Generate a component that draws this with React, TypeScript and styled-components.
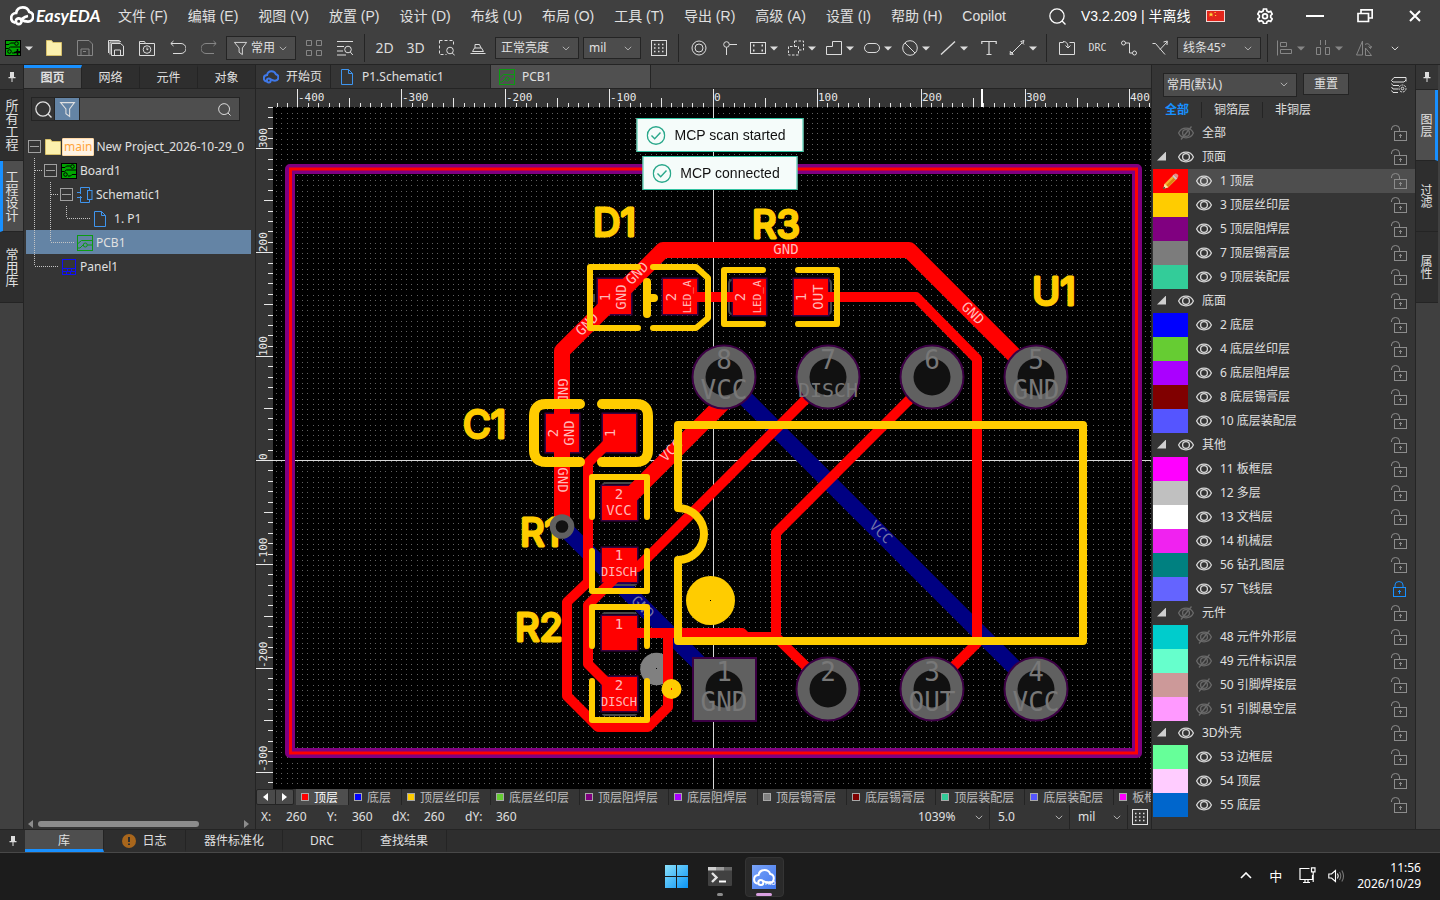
import React from 'react';
import styled, { createGlobalStyle, css } from 'styled-components';

const c = {
  bar: '#404040',
  panel: '#353535',
  tab: '#2e2e2e',
  active: '#4e4e4e',
  line: '#242424',
  text: '#e0e0e0',
  dim: '#868686',
  blue: '#1890ff',
  select: '#6484a5',
};

const GlobalStyle = createGlobalStyle`
  * { box-sizing: border-box; }
  body {
    margin: 0;
    background: ${c.bar};
    color: ${c.text};
    font: 12px/16px "Noto Sans", "Noto Sans CJK SC", sans-serif;
    overflow: hidden;
  }
  button, input, select { font: inherit; color: inherit; border: 0; margin: 0; padding: 0; background: none; border-radius: 0; }
  svg { display: block; flex: none; }
`;

/* ---------- icons ---------- */

const Glyph = ({ size = 16, children, w = 1 }: { size?: number; children: React.ReactNode; w?: number }) => (
  <svg width={size} height={size} viewBox="0 0 16 16" fill="none" stroke="currentColor" strokeWidth={w} aria-hidden="true">
    {children}
  </svg>
);

const Chevron = () => (
  <svg width="8" height="5" viewBox="0 0 8 5" fill="none" stroke="currentColor" aria-hidden="true">
    <path d="M.8.8 4 3.9 7.2.8" />
  </svg>
);

const Caret = () => (
  <svg width="8" height="5" viewBox="0 0 8 5" fill="currentColor" aria-hidden="true">
    <path d="M0 .5h8L4 4.5z" />
  </svg>
);

const BoardIcon = ({ plus }: { plus?: boolean }) => (
  <Glyph size={16}>
    <rect x=".5" y=".5" width="15" height="15" fill="#00a600" stroke="#000" />
    <g stroke="#000">
      <path d="M1 4.500h3l1.500-1.500h4M15 11.500h-4l-1.500 1.500H7" />
      <circle cx="11.500" cy="3.500" r="1.800" />
      <circle cx="4.500" cy="11.500" r="1.800" />
      <path d="M1 8.500h2.500l2-1.500H15" />
    </g>
    {plus && <path d="M12.500 9v7M9 12.500h7" stroke="#000" strokeWidth="1.500" />}
  </Glyph>
);
const FolderIcon = () => (
  <Glyph>
    <path d="M.5 15.500V.500h5l1.500 2h8.500v13z" fill="#fbf0ae" stroke="#d6bf6a" />
  </Glyph>
);
const PcbIcon = () => (
  <Glyph>
    <g stroke="#0c9a12">
      <rect x=".5" y=".5" width="15" height="15" />
      <path d="M1 8.500 4.500 5.500H15M10.500 10H15M1 13h2l3-3" />
      <circle cx="8.300" cy="10" r="2" />
    </g>
  </Glyph>
);
const FileIcon = () => (
  <Glyph>
    <path d="M2.500.5h7l4 4v11h-11zM9.500.5v4h4" stroke="#3f95ee" />
  </Glyph>
);
const SchematicIcon = () => (
  <Glyph>
    <g stroke="#3f95ee">
      <path d="M0 5.500h3M0 10.500h5M3.500 4v3M3.500 5V.500h9V3M3.500 9v6.500h9V13" />
      <rect x="10.500" y="3.500" width="4.500" height="9" />
    </g>
  </Glyph>
);
const PanelIcon = () => (
  <Glyph>
    <g stroke="#1010f5">
      <rect x="1.500" y=".5" width="13" height="15" />
      <path d="M2 9.500h12M2 12.500h12M6.500 9.500v3M10.500 9.500v3M5.500 12.500v3M9.500 12.500v3" />
    </g>
  </Glyph>
);
const CLOUD = 'M3.500 12.500C1.500 12 .8 10.800.8 9.300c0-2 1.500-3.200 3.300-3.300C4.500 3.800 6.300 2.300 8.500 2.300c2 0 3.600 1.100 4.300 2.900 1.700.3 2.600 1.600 2.600 3.100 0 2.200-1.500 3.400-3.400 3.400-1.800 0-2.800-.2-4.300-1.300';
const CloudIcon = ({ size = 16, w = 2 }: { size?: number; w?: number }) => (
  <Glyph size={size} w={w}>
    <path d={CLOUD} />
    <path d="M12 8c-1.500.2-2.500.8-4.500 2.300" />
    <circle cx="5.800" cy="11.500" r="1.900" />
  </Glyph>
);
const Magnifier = ({ size = 16 }: { size?: number }) => (
  <Glyph size={size} w={1.2}>
    <circle cx="7.500" cy="7.500" r="6.700" />
    <path d="m12.300 12.300 3.200 3.200" />
  </Glyph>
);
const Funnel = ({ size = 16 }: { size?: number }) => (
  <Glyph size={size}>
    <path d="M1.500 1.500h13L10 7.500v7l-3.500-2.500V7.500z" />
  </Glyph>
);
const PinIcon = () => (
  <svg width="8" height="10" viewBox="0 0 8 10" fill="#ddd" aria-hidden="true">
    <path d="M2 0h4v5h1.500v1.200h-3V10h-1V6.200h-3V5H2z" />
  </svg>
);
const Eye = ({ off }: { off?: boolean }) => (
  <Glyph w={1.3}>
    <g stroke={off ? '#6a6a6a' : '#d8d8d8'}>
      <path d="M.6 8C2 5 4.600 3.200 8 3.200S14 5 15.400 8C14 11 11.400 12.800 8 12.800S2 11 .6 8z" />
      <circle cx="8" cy="8" r="3.400" />
      {off && <path d="M13.500 1.500 3 14.500" />}
    </g>
  </Glyph>
);
const Lock = ({ closed }: { closed?: boolean }) => (
  <Glyph>
    <g stroke={closed ? c.blue : '#8c8c8c'}>
      <path d={closed ? 'M4 6.500V4a4 3.500 0 0 1 8 0v2.500' : 'M.5 5V4a4 3.500 0 0 1 8 0v2.500'} />
      <rect x={closed ? 2.5 : 3.5} y="6.500" width={closed ? 12 : 12} height="9" />
      <path d={closed ? 'M8.500 9v4M7 10.500h3' : 'M9.500 9v4M8 10.500h3'} />
    </g>
  </Glyph>
);
const DotGrid = () => (
  <Glyph>
    <rect x=".5" y=".5" width="15" height="15" />
    <path d="M3 4.500h11M3 8h11M3 11.500h11" strokeDasharray="1.500 2.500" strokeWidth="1.500" />
  </Glyph>
);

const icons: Record<string, React.ReactNode> = {
  save: <path d="M.5.500V15.500h15V4L12 .500H.500zM4 15.500V9h8v6.500M6 11.500h3" />,
  saveAll: <path d="M3.500 3.500v12h12V6l-3-2.500zM6.500 15.500V10h6v5.500M.5 13V.500H11l2 1.500M2 14.500V2h10" />,
  recent: <><path d="M.5 15.500V1.500h5l1 2h9v12zM.5 3.500h6" /><circle cx="8" cy="9.500" r="3.800" /><path d="M8 7.500v2.500l1.500-1" /></>,
  undo: <path d="M3.500 1 .8 3.500 3.500 6M1 3.500h10a4.500 4.500 0 0 1 0 10H3" />,
  redo: <path d="m12.500 1 2.700 2.500L12.500 6M15 3.500H5a4.500 4.500 0 0 0 0 10h8" />,
  four: <path d="M.500.500h5v5h-5zM10.500.500h5v5h-5zM.500 10.500h5v5h-5zM10.500 10.500h5v5h-5z" />,
  find: <><path d="M0 1.500h16M0 6.500h7M0 11h6M0 15h9" /><circle cx="11" cy="9.500" r="3.300" /><path d="m13.300 12 2.500 3" /></>,
  area: <><path d="M.5.500h14v6M.5.500v14h7" strokeDasharray="3 2" /><circle cx="11" cy="10.500" r="3.300" /><path d="m13.300 13 2.500 2.500" /></>,
  stamp: <path d="M.5 13.500h15M2.500 11.500 4.500 8h7l2 3.500zM5 8V4.500h4.500L11 8" />,
  target: <><circle cx="8" cy="8" r="7" /><circle cx="8" cy="8" r="4" /></>,
  node: <><circle cx="4.500" cy="4.500" r="2.800" /><path d="M7.300 4.500H15M4.500 7.300V15" /></>,
  rect: <><rect x=".5" y="2.500" width="15" height="11" /><path d="M3 5.500h1.500M3 10.500h1.500M11.500 5.500H13M11.500 10.500H13" strokeWidth="2" /></>,
  region: <path d="M6.500 1h9v9h-5v5H.500V6.500h6zM6.500 6.500h4v4" strokeDasharray="2.500 1.500" />,
  poly: <path d="M.5 14.500v-8h6v-5h9v13z" />,
  slot: <rect x=".5" y="3.500" width="15" height="9" rx="4.500" />,
  forbid: <><circle cx="8" cy="8" r="7.300" /><path d="m3 3 10 10" /></>,
  line: <path d="M1 14.500 15 1.500" strokeWidth="1.400" />,
  text: <path d="M.8 4V1.500h14.400V4M8 1.500v13M5.500 14.500h5" strokeWidth="1.200" />,
  measure: <path d="m3 13 10-10M1 11.500l3.500 3.500M11.500 1 15 4.500M12 1.500l3-1-1 3M1 14.500l.5-3 2.500 2.500z" />,
  import: <path d="M4.500 2.500h-4v12h15v-12h-5M4 1.500c3.500 0 5 2 5 6M6.500 5.500 9 8l2.500-2.500" />,
  route: <><circle cx="2.500" cy="3" r="2" /><circle cx="13.500" cy="13" r="2" /><path d="M4.500 3h4v10h3" /></>,
  branch: <path d="M.5 3.500h3L13 14.500M8 9.500l7-7.500M11.500 2 15.300 1 15 5" />,
  align: <path d="M.5.500v15M3.500 2.500h6v4h-6zM3.500 9.500h11v4h-11z" />,
  spread: <path d="M5.500 0v5M10.500 0v5M1.500 7.500h4v7h-4zM10.500 7.500h4v7h-4z" />,
  flip: <path d="M6.500 1v14h-6zM9.500 8l6 7.500h-6zM9 4.500c3-2 5.500 0 5.500 4M12.500 6.500l2 2 1.500-2.500" />,
};

/* ---------- menu bar ---------- */

const Page = styled.div`
  display: flex;
  flex-direction: column;
  min-height: 100vh;
`;
const MenuBar = styled.header`
  display: flex;
  align-items: center;
  height: 32px;
  padding: 0 19px 0 10px;
  font: 14px/32px "Liberation Sans", "Noto Sans CJK SC", sans-serif;
`;
const Logo = styled.div`
  display: flex;
  align-items: center;
  gap: 2px;
  width: 98px;
  color: #fff;
  font: italic 700 17px/32px Lato, sans-serif;
`;
const Menus = styled.nav`
  display: flex;
  flex: 1;
  gap: 20px;
  padding-left: 10px;
  white-space: nowrap;
`;
const MenuButton = styled.button`
  cursor: pointer;
`;
const WindowTools = styled.div`
  display: flex;
  align-items: center;
  color: #fff;
  white-space: nowrap;
`;
const WindowButton = styled.button<{ $gap: number }>`
  margin-left: ${(p) => p.$gap}px;
`;
const Version = styled.span`
  width: 112px;
  margin-left: 15px;
`;

const menus = ['文件 (F)', '编辑 (E)', '视图 (V)', '放置 (P)', '设计 (D)', '布线 (U)', '布局 (O)', '工具 (T)', '导出 (R)', '高级 (A)', '设置 (I)', '帮助 (H)', 'Copilot'];

const TopMenu = () => (
  <MenuBar>
    <Logo><CloudIcon size={24} w={1.8} />EasyEDA</Logo>
    <Menus>{menus.map((m) => <MenuButton key={m}>{m}</MenuButton>)}</Menus>
    <WindowTools>
      <WindowButton $gap={0} aria-label="搜索"><Magnifier size={17} /></WindowButton>
      <Version>V3.2.209 | 半离线</Version>
      <WindowButton $gap={13} aria-label="语言">
        <svg width="19" height="12" viewBox="0 0 19 12"><rect x=".5" y=".5" width="18" height="11" fill="#e3251b" stroke="#f3d6d4" /><path d="m5 2 .7 1.700h1.800L6.100 4.800l.6 1.800L5 5.500 3.300 6.600l.6-1.800-1.400-1.100h1.800zM8.500 2h1.200v1H8.500zM9 5h1.200v1H9z" fill="#ffd83a" /></svg>
      </WindowButton>
      <WindowButton $gap={32} aria-label="设置">
        <Glyph w={1.7}><path d="M6.500 1h3l.5 2.100 1.700 1 2-.7 1.500 2.600-1.500 1.500v1.900l1.500 1.500-1.500 2.600-2-.7-1.700 1-.5 1.700h-3L6 13.800l-1.700-1-2 .7-1.500-2.600 1.500-1.500V7.500L.8 6l1.500-2.600 2 .7L6 3.100z" /><circle cx="8" cy="8.300" r="2.400" /></Glyph>
      </WindowButton>
      <WindowButton $gap={33} aria-label="最小化"><svg width="18" height="2"><rect width="18" height="2" fill="#fff" /></svg></WindowButton>
      <WindowButton $gap={33} aria-label="还原"><Glyph w={1.7}><path d="M1 5.500h10.500v8H1zM4 5V1.800h11.200V10H12" /></Glyph></WindowButton>
      <WindowButton $gap={36} aria-label="关闭"><svg width="12" height="12" stroke="#fff" strokeWidth="2"><path d="m1 1 10 10M11 1 1 11" /></svg></WindowButton>
    </WindowTools>
  </MenuBar>
);

/* ---------- toolbar ---------- */

const ToolbarRow = styled.div`
  display: flex;
  align-items: center;
  height: 33px;
  border-bottom: 1px solid ${c.line};
`;
const ToolButton = styled.button<{ $kind?: 'menu'; $dim?: boolean; $small?: boolean }>`
  display: flex;
  align-items: center;
  justify-content: center;
  gap: 4px;
  flex: none;
  width: ${(p) => (p.$kind ? 38 : 31)}px;
  height: 28px;
  color: ${(p) => (p.$dim ? c.dim : '#dcdcdc')};
  ${(p) => p.$small && css`font: 10px/16px "DejaVu Sans Mono", monospace;`}
  ${(p) => !p.$small && css`font-size: 14px;`}
`;
const Divider = styled.i`
  width: 1px;
  height: 28px;
  margin: 0 4px;
  background: ${c.line};
`;
const SelectBox = styled.label<{ $w: number; $inset?: number; $plain?: boolean; $h?: number }>`
  position: relative;
  display: flex;
  align-items: center;
  flex: none;
  width: ${(p) => p.$w}px;
  height: ${(p) => p.$h ?? 22}px;
  margin: 0 2px;
  background: ${(p) => (p.$plain ? 'none' : '#4c4c4c')};
  border: ${(p) => (p.$plain ? 'none' : `1px solid ${c.line}`)};
  select { width: 100%; height: 100%; padding-left: ${(p) => p.$inset ?? 5}px; appearance: none; outline: 0; }
  svg { position: absolute; pointer-events: none; color: #b0b0b0; }
  svg:last-child { right: 8px; }
  svg:first-child { left: 6px; color: #ddd; }
`;
const Picker = (p: { label: string; value: string; w: number; inset?: number; h?: number; icon?: React.ReactNode; plain?: boolean }) => (
  <SelectBox $w={p.w} $inset={p.inset} $plain={p.plain} $h={p.h}>
    {p.icon}
    <select aria-label={p.label} defaultValue={p.value}><option>{p.value}</option></select>
    <Chevron />
  </SelectBox>
);
const Tool = ({ id, menu, dim }: { id: string; menu?: boolean; dim?: boolean }) => (
  <ToolButton $kind={menu ? 'menu' : undefined} $dim={dim} aria-label={id}>
    <Glyph>{icons[id]}</Glyph>
    {menu && <Caret />}
  </ToolButton>
);

const Toolbar = () => (
  <ToolbarRow>
    <ToolButton $kind="menu" aria-label="新建"><BoardIcon plus /><Caret /></ToolButton>
    <ToolButton aria-label="打开"><FolderIcon /></ToolButton>
    <Tool id="save" dim /><Tool id="saveAll" /><Tool id="recent" /><Tool id="undo" /><Tool id="redo" dim />
    <Picker label="过滤" value="常用" w={70} h={24} inset={24} icon={<Funnel size={15} />} />
    <Tool id="four" dim /><Tool id="find" />
    <Divider />
    <ToolButton>2D</ToolButton><ToolButton>3D</ToolButton><Tool id="area" /><Tool id="stamp" />
    <Picker label="亮度" value="正常亮度" w={84} />
    <Picker label="单位" value="mil" w={58} />
    <ToolButton aria-label="网格"><DotGrid /></ToolButton>
    <Divider />
    <Tool id="target" /><Tool id="node" />
    <Tool id="rect" menu /><Tool id="region" menu /><Tool id="poly" menu /><Tool id="slot" menu /><Tool id="forbid" menu /><Tool id="line" menu />
    <Tool id="text" /><Tool id="measure" menu />
    <Divider />
    <Tool id="import" /><ToolButton $small>DRC</ToolButton><Tool id="route" /><Tool id="branch" />
    <Picker label="布线角度" value="线条45°" w={84} />
    <Divider />
    <Tool id="align" menu dim /><Tool id="spread" menu dim /><Tool id="flip" dim />
    <ToolButton aria-label="更多"><Chevron /></ToolButton>
  </ToolbarRow>
);

/* ---------- side rails ---------- */

const Body = styled.div`
  display: flex;
  flex: 1;
  min-height: 0;
`;
const Rail = styled.div<{ $right?: boolean }>`
  display: flex;
  flex-direction: column;
  flex: none;
  width: ${(p) => (p.$right ? 25 : 24)}px;
  ${(p) => (p.$right ? `padding-right: 2px; border-left: 1px solid ${c.line};` : `border-right: 1px solid ${c.line};`)}
`;
const PinButton = styled.button`
  display: grid;
  place-items: center;
  width: 100%;
  height: 25px;
  background: ${c.panel};
  border-bottom: 1px solid ${c.line};
`;
const RailTab = styled.button<{ $on?: boolean; $right?: boolean }>`
  display: flex;
  align-items: center;
  justify-content: center;
  height: 71px;
  background: ${(p) => (p.$on ? c.active : c.tab)};
  border-bottom: 1px solid ${c.line};
  padding-right: ${(p) => (p.$on && p.$right ? 1 : p.$right ? 4 : p.$on ? 3 : 0)}px;
  ${(p) => p.$on && (p.$right ? `border-right: 3px solid ${c.blue};` : `border-left: 3px solid ${c.blue};`)}
  writing-mode: vertical-rl;
  font-size: ${(p) => (p.$right ? 12 : 13)}px;
`;

/* ---------- project tree ---------- */

const Side = styled.aside`
  display: flex;
  flex-direction: column;
  flex: none;
  width: 232px;
  background: ${c.panel};
  border-right: 1px solid ${c.line};
`;
const TabStrip = styled.div`
  display: flex;
  height: 24px;
  border-bottom: 1px solid ${c.line};
`;
const SideTab = styled.button<{ $on?: boolean }>`
  flex: 1;
  border-right: 1px solid ${c.line};
  border-top: 3px solid ${(p) => (p.$on ? c.blue : 'transparent')};
  background: ${(p) => (p.$on ? c.active : c.tab)};
  font-weight: ${(p) => (p.$on ? 700 : 400)};
  line-height: 18px;
  &:last-child { border-right: 0; }
`;
const SearchBar = styled.div`
  display: flex;
  align-items: stretch;
  height: 24px;
  margin: 8px 15px 13px 7px;
  border: 1px solid ${c.line};
`;
const SearchMode = styled.button<{ $on?: boolean }>`
  display: grid;
  place-items: center;
  flex: none;
  width: ${(p) => (p.$on ? 25 : 23)}px;
  background: ${(p) => (p.$on ? c.select : 'none')};
  border-right: 1px solid ${c.line};
`;
const SearchField = styled.label`
  display: flex;
  align-items: center;
  flex: 1;
  min-width: 0;
  padding-right: 8px;
  background: ${c.active};
  input { flex: 1; width: 100%; min-width: 0; outline: 0; }
`;
const Tree = styled.div`
  position: relative;
  flex: 1;
  margin: 0 4px 0 2px;
`;
const TreeLines = styled.svg`
  position: absolute;
  left: 0;
  top: 0;
  pointer-events: none;
`;
const TreeRow = styled.div<{ $indent: number; $on?: boolean }>`
  display: flex;
  align-items: center;
  gap: 3px;
  height: 24px;
  padding: 1px 0 0 ${(p) => p.$indent}px;
  background: ${(p) => (p.$on ? c.select : 'none')};
  white-space: nowrap;
  overflow: hidden;
`;
const Fold = styled.button`
  flex: none;
  width: 13px;
  height: 13px;
  margin-right: 1px;
  border: 1px solid #a0a0a0;
  background: linear-gradient(#a0a0a0, #a0a0a0) center / 9px 1px no-repeat ${c.panel};
`;
const Tag = styled.span`
  margin: 0 -1px 0 -2px;
  padding: 0 1px;
  height: 18px;
  background: #fff3e4;
  border: 1px solid #ffd9a6;
  border-radius: 1px;
  color: #ffa53d;
  line-height: 16px;
`;
const ScrollRow = styled.div`
  display: flex;
  align-items: center;
  height: 11px;
  gap: 4px;
  padding: 0 6px 0 4px;
  color: #8c8c8c;
`;
const Thumb = styled.div`
  width: 73%;
  height: 6px;
  margin: 0 auto 0 1px;
  border-radius: 3px;
  background: #8c8c8c;
`;

const ProjectPanel = () => (
  <Side>
    <TabStrip>
      <SideTab $on>图页</SideTab><SideTab>网络</SideTab><SideTab>元件</SideTab><SideTab>对象</SideTab>
    </TabStrip>
    <SearchBar>
      <SearchMode aria-label="查找"><Magnifier size={17} /></SearchMode>
      <SearchMode $on aria-label="筛选"><Funnel size={17} /></SearchMode>
      <SearchField><input aria-label="筛选内容" /><Magnifier size={13} /></SearchField>
    </SearchBar>
    <Tree>
      <TreeRow $indent={2}><Fold aria-label="折叠" /><FolderIcon /><Tag>main</Tag><span>New Project_2026-10-29_0</span></TreeRow>
      <TreeRow $indent={18}><Fold aria-label="折叠" /><BoardIcon /><span>Board1</span></TreeRow>
      <TreeRow $indent={34}><Fold aria-label="折叠" /><SchematicIcon /><span>Schematic1</span></TreeRow>
      <TreeRow $indent={66}><FileIcon /><span>&nbsp;1. P1</span></TreeRow>
      <TreeRow $indent={51} $on><PcbIcon /><span>PCB1</span></TreeRow>
      <TreeRow $indent={35}><PanelIcon /><span>Panel1</span></TreeRow>
      <TreeLines width="70" height="140" fill="none" stroke="#c4c4c4" strokeDasharray="1 1">
        <path d="M8.500 24v108M9 36.500h8M9 132.500h23M24.500 48v60M25 60.500h8M25 108.500h24M40.500 72v12M41 84.500h23" />
      </TreeLines>
    </Tree>
    <ScrollRow>
      <svg width="5" height="8" fill="currentColor"><path d="M5 0v8L0 4z" /></svg>
      <Thumb />
      <svg width="5" height="8" fill="currentColor"><path d="M0 0v8l5-4z" /></svg>
    </ScrollRow>
  </Side>
);

/* ---------- editor ---------- */

const Editor = styled.main`
  display: flex;
  flex-direction: column;
  flex: 1;
  min-width: 0;
  background: ${c.panel};
  border-right: 1px solid ${c.line};
`;
const DocTabs = styled(TabStrip)`
  background: ${c.bar};
`;
const DocTab = styled.button<{ $on?: boolean; $w: number }>`
  display: flex;
  align-items: center;
  gap: 7px;
  width: ${(p) => p.$w}px;
  padding: 1px 0 0 ${(p) => (p.$w > 80 ? 8 : 7)}px;
  background: ${(p) => (p.$on ? '#505050' : c.panel)};
  border-right: 1px solid ${c.line};
  white-space: nowrap;
`;
const TopRuler = styled.svg`
  width: 100%;
  height: 18px;
`;
const Stage = styled.div`
  display: flex;
  flex: 1;
  min-height: 0;
`;
const LeftRuler = styled.svg`
  width: 17px;
  height: 100%;
`;
const Board = styled.svg`
  flex: 1;
  min-width: 0;
  height: 100%;
  background: #000;
`;

const ORIGIN = { x: 713, y: 461 };
const STEP = 10.39;
const ticks = Array.from({ length: 85 }, (_, i) => i - 42);
const rulerText = { fill: '#e8e8e8', fontFamily: '"DejaVu Sans Mono", monospace', fontSize: 11 };

const HorizontalRuler = () => (
  <TopRuler>
    <g transform="translate(-256 -89)">
      {ticks.map((k) => {
        const x = Math.round(ORIGIN.x + k * STEP);
        const h = k % 10 === 0 ? 18 : k % 5 === 0 ? 9 : 4;
        return <rect key={k} x={x} y={107 - h} width="1" height={h} fill="#e8e8e8" />;
      })}
      {[-400, -300, -200, -100, 0, 100, 200, 300, 400].map((v) => (
        <text key={v} x={Math.round(ORIGIN.x + (v / 10) * STEP) + 1} y="101" {...rulerText}>{v}</text>
      ))}
      <rect x="981" y="89" width="2" height="18" fill="#fff" />
    </g>
  </TopRuler>
);

const VerticalRuler = () => (
  <LeftRuler>
    <g transform="translate(-256 -107)">
      {ticks.filter((k) => Math.abs(k) < 35).map((k) => {
        const w = k % 10 === 0 ? 17 : k % 5 === 0 ? 9 : 5;
        return <rect key={k} x={273 - w} y={Math.round(ORIGIN.y + k * STEP) - 1} width={w} height="1" fill="#e8e8e8" />;
      })}
      {[300, 200, 100, 0, -100, -200, -300].map((v) => (
        <text key={v} transform={`translate(267 ${Math.round(ORIGIN.y - (v / 10) * STEP) - 1}) rotate(-90)`} {...rulerText}>{v}</text>
      ))}
    </g>
  </LeftRuler>
);

const Label = ({ x, y, r = 0, s = 14, fill = '#ffb8b8', children }: { x: number; y: number; r?: number; s?: number; fill?: string; children: string }) => (
  <text transform={`translate(${x} ${y}) rotate(${r})`} y={Math.round(s * 0.36)} textAnchor="middle" fontFamily='"DejaVu Sans Mono", monospace' fontSize={s} fill={fill}>
    {children}
  </text>
);

const pads = [
  [598, 279, 33, 35], [663, 279, 34, 35], [733, 279, 33, 36], [794, 279, 34, 36],
  [546, 414, 33, 38], [603, 414, 33, 38], [602, 486, 35, 34], [602, 548, 35, 34], [602, 616, 35, 34], [602, 677, 35, 34],
];
const pins = [
  { x: 724, y: 377, n: '8', net: 'VCC' }, { x: 828, y: 377, n: '7', net: 'DISCH' }, { x: 932, y: 377, n: '6', net: '' }, { x: 1036, y: 377, n: '5', net: 'GND' },
  { x: 724, y: 689, n: '1', net: 'GND' }, { x: 828, y: 689, n: '2', net: '' }, { x: 932, y: 689, n: '3', net: 'OUT' }, { x: 1036, y: 689, n: '4', net: 'VCC' },
];
const designators: [string, number, number][] = [['D1', 593, 236], ['R3', 752, 238], ['U1', 1032, 305], ['C1', 463, 438], ['R1', 520, 546], ['R2', 515, 641]];

const BoardView = () => (
  <Board role="img" aria-label="PCB1">
    <defs>
      <pattern id="dots" x="271" y="97" width="26" height="26" patternUnits="userSpaceOnUse">
        {[0, 5, 10, 16, 21].map((y) => [0, 5, 10, 16, 21].map((x) => <rect key={`${x}-${y}`} x={x} y={y} width="1" height="1" fill="#606060" />))}
      </pattern>
    </defs>
    <g transform="translate(-273 -107)">
      <rect x="273" y="107" width="4000" height="3000" fill="url(#dots)" />
      <path d="M713.500 107v3000M273 460.500h4000" stroke="#d8d8d8" />
      <rect x="290" y="169" width="847" height="584" fill="none" stroke="#800080" strokeWidth="10" strokeLinejoin="round" />
      <rect x="290.500" y="169" width="846" height="584" fill="none" stroke="#f00" strokeWidth="3" />
      <g fill="none" stroke="#000082" strokeWidth="16">
        <path d="M562 526 724 688M724 377l312 312" />
      </g>
      <Label x={881} y={532} r={45} fill="#7474a8">VCC</Label>
      <Label x={643} y={607} r={45} fill="#7474a8">GND</Label>
      <circle cx="656.500" cy="669" r="16.300" fill="#808080" />
      <rect x="656" y="668" width="1" height="1" />
      <g fill="none" stroke="#484848" strokeWidth="2">
        <path d="M594 294v8M732 280q-3 0-3 4v26q0 4 3 4M828 280q3 0 3 4v26q0 4-3 4M603 485q0-2 3-2h27q3 0 3 2M603 584q0 1 3 1h27q3 0 3-1M603 614q0-1 3-1h27q3 0 3 1M603 714q0 1 3 1h27q3 0 3-1" />
      </g>
      {pads.map(([x, y, w, h]) => <rect key={`${x}-${y}`} x={x} y={y} width={w} height={h} fill="#f00" stroke="#3a0040" strokeWidth="3" paintOrder="stroke" />)}
      <g fill="none" stroke="#f00" strokeLinejoin="round">
        <path strokeWidth="16" d="M1036 377 909 250H663L562 351v175M724 377v25L624 502h-5" />
        <path strokeWidth="10" d="M828 377 638 567h-19M619 574l-31 31v59l31 31M619 432l-31 31v119l-21 20v94l31 31h50l20-20v-74M619 633h123l4 4h30l52 51M932 377 776 533v104M812 297h104l61 62v284l-45 45M680 297h68" />
      </g>
      <Label x={786} y={249}>GND</Label>
      <Label x={637} y={273} r={-45}>GND</Label>
      <Label x={587} y={324} r={-45}>GND</Label>
      <Label x={563} y={391} r={90}>GND</Label>
      <Label x={563} y={480} r={90}>GND</Label>
      <Label x={973} y={313} r={45}>GND</Label>
      <Label x={671} y={450} r={-45}>VCC</Label>
      <Label x={605} y={297} r={-90}>1</Label>
      <Label x={621} y={297} r={-90}>GND</Label>
      <Label x={671} y={297} r={-90}>2</Label>
      <Label x={687} y={297} r={-90} s={11}>LED_A</Label>
      <Label x={740} y={297} r={-90}>2</Label>
      <Label x={757} y={297} r={-90} s={11}>LED_A</Label>
      <Label x={801} y={297} r={-90}>1</Label>
      <Label x={818} y={297} r={-90}>OUT</Label>
      <Label x={553} y={433} r={-90}>2</Label>
      <Label x={569} y={433} r={-90}>GND</Label>
      <Label x={610} y={433} r={-90}>1</Label>
      <Label x={619} y={494}>2</Label>
      <Label x={619} y={510}>VCC</Label>
      <Label x={619} y={555}>1</Label>
      <Label x={619} y={572} s={12}>DISCH</Label>
      <Label x={619} y={624}>1</Label>
      <Label x={619} y={685}>2</Label>
      <Label x={619} y={702} s={12}>DISCH</Label>
      <g fill="none" stroke="#fc0" strokeWidth="6" strokeLinecap="round" strokeLinejoin="round">
        <path d="M638 267h-48v61h48M653 267h43l12 11v40l-12 10h-43" />
        <path strokeWidth="8" d="M647 282v32M647 298h7" />
        <path d="M763 270h-39v54h39M798 270h39v54h-39" />
        <path strokeWidth="10" d="M580 404h-34q-12 0-12 12v34q0 12 12 12h34M602 404h34q12 0 12 12v34q0 12-12 12h-34" />
        <path d="M592 517v-40h55v40M592 551v40h55v-40M592 646v-39h55v39M592 681v39h55v-39" />
        <path strokeWidth="8" d="M678 508v-83h405v216H678v-81a26 26 0 0 0 0-52" />
      </g>
      <circle cx="710.500" cy="600.500" r="24.500" fill="#fc0" />
      <rect x="710" y="600" width="1" height="1" />
      <circle cx="671.500" cy="689" r="10" fill="#fc0" />
      <rect x="671" y="688" width="1" height="2" fill="#f00" />
      {designators.map(([t, x, y]) => (
        <text key={t} x={x} y={y} fill="#fc0" stroke="#fc0" strokeWidth="3" strokeLinejoin="round" fontFamily="Inter, sans-serif" fontSize="38">{t}</text>
      ))}
      <circle cx="562" cy="526.500" r="9.300" fill="#111" stroke="#606060" strokeWidth="6" />
      {pins.map((p) => (
        <g key={p.n}>
          {p.n === '1'
            ? <rect x={p.x - 31} y={p.y - 31} width="63" height="63" fill="#606060" stroke="#3c0044" strokeWidth="2" />
            : <circle cx={p.x} cy={p.y} r="31.500" fill="#606060" stroke="#3c0044" strokeWidth="2" />}
          <circle cx={p.x} cy={p.y} r="18.500" fill="#111" />
          <Label x={p.x} y={p.y - 17} s={26} fill="#787878">{p.n}</Label>
          <Label x={p.x} y={p.y + 13} s={p.net === 'DISCH' ? 20 : 26} fill="#787878">{p.net}</Label>
        </g>
      ))}
    </g>
  </Board>
);

const LayerTabs = styled.div`
  display: flex;
  height: 16px;
  overflow: hidden;
`;
const Stepper = styled.div`
  display: flex;
  flex: none;
  width: 38px;
  margin-right: 2px;
  border: 1px solid ${c.line};
  border-radius: 2px;
  background: #4a4a4a;
  button { flex: 1; display: grid; place-items: center; color: #fff; }
  button + button { border-left: 1px solid ${c.line}; }
`;
const LayerTab = styled.button<{ $on?: boolean }>`
  display: flex;
  align-items: center;
  flex: none;
  gap: 5px;
  padding: 1px 10px 0 5px;
  border-right: 1px solid ${c.line};
  background: ${(p) => (p.$on ? c.active : 'none')};
  color: ${(p) => (p.$on ? '#fff' : '#bdbdbd')};
  white-space: nowrap;
`;
const Chip = styled.i<{ $c: string }>`
  width: 8px;
  height: 8px;
  margin-bottom: 1px;
  border: 1px solid #a8a8a8;
  background: ${(p) => p.$c};
`;
const StatusBar = styled.div`
  display: flex;
  height: 24px;
  padding-left: 5px;
`;
const Readout = styled.dl<{ $w: number; $k: number }>`
  display: flex;
  width: ${(p) => p.$w}px;
  margin: 0;
  line-height: 24px;
  dt { width: ${(p) => p.$k}px; }
  dd { margin: 0; }
`;
const StatusPickers = styled.div`
  display: flex;
  align-items: center;
  margin-left: auto;
`;
const StatusCell = styled.div`
  display: flex;
  align-items: center;
  height: 24px;
  border-right: 1px solid ${c.line};
  label { margin: 0; }
  label svg:last-child { right: 6px; }
  &:last-child { padding: 0 3px 0 4px; border-right: 0; }
`;

const layerTabs: [string, string][] = [['顶层', '#ff0000'], ['底层', '#0000ff'], ['顶层丝印层', '#ffcc00'], ['底层丝印层', '#66cc33'], ['顶层阻焊层', '#800080'], ['底层阻焊层', '#aa00ff'], ['顶层锡膏层', '#808080'], ['底层锡膏层', '#800000'], ['顶层装配层', '#33cc99'], ['底层装配层', '#5555ff'], ['板框层', '#ff00ff']];

const EditorPane = () => (
  <Editor>
    <DocTabs>
      <DocTab $w={75}><Glyph w={2}><g stroke="#3f78e8"><path d={CLOUD} /><circle cx="5.800" cy="11.500" r="1.900" /></g></Glyph>开始页</DocTab>
      <DocTab $w={160}><FileIcon />P1.Schematic1</DocTab>
      <DocTab $w={160} $on><PcbIcon />PCB1</DocTab>
    </DocTabs>
    <HorizontalRuler />
    <Stage><VerticalRuler /><BoardView /></Stage>
    <LayerTabs>
      <Stepper>
        <button aria-label="上一个"><svg width="5" height="8" fill="currentColor"><path d="M5 0v8L0 4z" /></svg></button>
        <button aria-label="下一个"><svg width="5" height="8" fill="currentColor"><path d="M0 0v8l5-4z" /></svg></button>
      </Stepper>
      {layerTabs.map(([name, color], i) => <LayerTab key={name} $on={i === 0}><Chip $c={color} />{name}</LayerTab>)}
    </LayerTabs>
    <StatusBar>
      <Readout $w={66} $k={25}><dt>X:</dt><dd>260</dd></Readout>
      <Readout $w={65} $k={25}><dt>Y:</dt><dd>360</dd></Readout>
      <Readout $w={73} $k={32}><dt>dX:</dt><dd>260</dd></Readout>
      <Readout $w={73} $k={31}><dt>dY:</dt><dd>360</dd></Readout>
      <StatusPickers>
        <StatusCell><Picker plain label="缩放" value="1039%" w={79} inset={8} /></StatusCell>
        <StatusCell><Picker plain label="栅格" value="5.0" w={79} inset={8} /></StatusCell>
        <StatusCell><Picker plain label="单位" value="mil" w={57} inset={8} /></StatusCell>
        <StatusCell><DotGrid /></StatusCell>
      </StatusPickers>
    </StatusBar>
  </Editor>
);

/* ---------- layer panel ---------- */

const LayerPanel = styled.aside`
  flex: none;
  width: 263px;
  padding-left: 1px;
  background: ${c.panel};
`;
const LayerHead = styled.div`
  display: flex;
  align-items: center;
  height: 36px;
  padding: 3px 8px 0 8px;
  > svg { margin-left: auto; }
`;
const ResetButton = styled.button`
  width: 46px;
  height: 22px;
  margin: 0 0 2px 4px;
  background: ${c.active};
  border: 1px solid ${c.line};
`;
const FilterTabs = styled.div`
  display: flex;
  align-items: center;
  height: 20px;
  padding-bottom: 2px;
`;
const FilterTab = styled.button<{ $on?: boolean }>`
  padding: 0 12px;
  color: ${(p) => (p.$on ? c.blue : c.text)};
  font-weight: ${(p) => (p.$on ? 700 : 400)};
  line-height: 16px;
  & + & { border-left: 1px solid ${c.line}; }
`;
const LayerRow = styled.div<{ $on?: boolean }>`
  display: flex;
  align-items: center;
  height: 24px;
  padding-right: 8px;
  gap: 8px;
  background: ${(p) => (p.$on ? c.active : 'none')};
  > span { flex: 1; }
`;
const Swatch = styled.i<{ $c: string }>`
  display: grid;
  place-items: center;
  width: 35px;
  height: 24px;
  background: ${(p) => p.$c};
`;
const Twisty = styled.i<{ $open?: boolean }>`
  width: 9px;
  height: 9px;
  margin: 0 4px 2px 4px;
  background: ${(p) => (p.$open ? '#cfcfcf' : 'none')};
  clip-path: polygon(100% 0, 100% 100%, 0 100%);
`;

type Layer = { name: string; color?: string; off?: boolean; locked?: boolean; active?: boolean; open?: boolean };
const layers: Layer[] = [
  { name: '全部', off: true },
  { name: '顶面', open: true },
  { name: '1 顶层', color: '#ff0000', active: true },
  { name: '3 顶层丝印层', color: '#ffcc00' },
  { name: '5 顶层阻焊层', color: '#800080' },
  { name: '7 顶层锡膏层', color: '#7c7c7c' },
  { name: '9 顶层装配层', color: '#33cc99' },
  { name: '底面', open: true },
  { name: '2 底层', color: '#0000ff' },
  { name: '4 底层丝印层', color: '#66cc33' },
  { name: '6 底层阻焊层', color: '#aa00ff' },
  { name: '8 底层锡膏层', color: '#800000' },
  { name: '10 底层装配层', color: '#5555ff' },
  { name: '其他', open: true },
  { name: '11 板框层', color: '#ff00ff' },
  { name: '12 多层', color: '#c0c0c0' },
  { name: '13 文档层', color: '#ffffff' },
  { name: '14 机械层', color: '#f022f0' },
  { name: '56 钻孔图层', color: '#008080' },
  { name: '57 飞线层', color: '#6464ff', locked: true },
  { name: '元件', open: true, off: true },
  { name: '48 元件外形层', color: '#00cccc', off: true },
  { name: '49 元件标识层', color: '#66ffcc', off: true },
  { name: '50 引脚焊接层', color: '#cc9999', off: true },
  { name: '51 引脚悬空层', color: '#ff99ff', off: true },
  { name: '3D外壳', open: true },
  { name: '53 边框层', color: '#66ff99' },
  { name: '54 顶层', color: '#ffccff' },
  { name: '55 底层', color: '#0066cc' },
];

const Layers = () => (
  <LayerPanel>
    <LayerHead>
      <Picker label="图层方案" value="常用(默认)" w={134} h={24} inset={3} />
      <ResetButton>重置</ResetButton>
      <Glyph><path d="M3 .500h12v4M3 .500.500 3.500 2 5h11l2-2M.5 6.500 2 8.500h6M.5 10l1.500 2h5M.5 13.500l1.500 2h5" /><circle cx="11.500" cy="11.500" r="3.500" strokeDasharray="2 1" /><circle cx="11.500" cy="11.500" r="1.300" /></Glyph>
    </LayerHead>
    <FilterTabs><FilterTab $on>全部</FilterTab><FilterTab>铜箔层</FilterTab><FilterTab>非铜层</FilterTab></FilterTabs>
    {layers.map((l) => (
      <LayerRow key={l.name} $on={l.active}>
        {l.color
          ? (
            <Swatch $c={l.color}>
              {l.active && (
                <svg width="17" height="17" viewBox="0 0 16 16">
                  <path d="m1 15 1.500-5L9.500 3l3.500 3.500-7 7z" fill="#f5b331" />
                  <path d="M3 12.500 11 4.500l1.500 1.500L5 14z" fill="#d98512" />
                  <path d="M9.500 3 11 1.500 14.500 5 13 6.500z" fill="#c9c9c9" />
                  <path d="M11 1.500 12.500.5q2-.2 3 2L14.500 5z" fill="#e58d86" />
                  <path d="m1 15 1.500-5 3.500 3.500z" fill="#ffe0a8" />
                  <path d="m1 15 .7-2.300L3.300 14.300z" fill="#222" />
                </svg>
              )}
            </Swatch>
          )
          : <Twisty $open={l.open} />}
        <Eye off={l.off} />
        <span>{l.name}</span>
        <Lock closed={l.locked} />
      </LayerRow>
    ))}
  </LayerPanel>
);

/* ---------- bottom bars ---------- */

const BottomTabs = styled.div`
  display: flex;
  height: 24px;
  background: ${c.tab};
  border-top: 1px solid ${c.line};
  border-bottom: 1px solid #484848;
`;
const BottomPin = styled.button`
  display: grid;
  place-items: center;
  width: 25px;
`;
const BottomTab = styled.button<{ $w: number; $on?: boolean }>`
  display: flex;
  align-items: center;
  justify-content: center;
  gap: 6px;
  width: ${(p) => p.$w}px;
  padding-top: 3px;
  border-right: 1px solid ${c.line};
  border-bottom: 3px solid ${(p) => (p.$on ? c.blue : 'transparent')};
  background: ${(p) => (p.$on ? c.active : 'none')};
`;
const Taskbar = styled.footer`
  display: grid;
  grid-template-columns: 1fr auto 1fr;
  height: 47px;
  background: #1c1c1c;
`;
const Apps = styled.div`
  grid-column: 2;
  display: flex;
  align-items: center;
  gap: 5px;
`;
const AppButton = styled.button<{ $on?: boolean; $run?: boolean }>`
  position: relative;
  display: grid;
  place-items: center;
  width: 39px;
  height: 40px;
  border-radius: 4px;
  background: ${(p) => (p.$on ? '#2a2a2a' : 'none')};
  border: 1px solid ${(p) => (p.$on ? '#343434' : 'transparent')};
  ${(p) => (p.$on || p.$run) && css`
    &::after {
      content: '';
      position: absolute;
      bottom: 0;
      width: ${p.$on ? 16 : 6}px;
      height: 3px;
      border-radius: 2px;
      background: ${p.$on ? '#d9a0e0' : '#8c8c8c'};
    }
  `}
`;
const Tray = styled.div`
  display: flex;
  align-items: center;
  justify-content: flex-end;
  gap: 12px;
  padding: 0 19px 2px 0;
  color: #fff;
  font-size: 13px;
  span { margin: 0 5px; }
`;
const Clock = styled.time`
  font-size: 12px;
  line-height: 16px;
  text-align: right;
`;

/* ---------- toasts ---------- */

const Toasts = styled.div`
  position: fixed;
  top: 118px;
  left: 50%;
  transform: translateX(-50%);
  display: flex;
  flex-direction: column;
  align-items: center;
  gap: 4px;
`;
const Toast = styled.div`
  display: flex;
  align-items: center;
  gap: 9px;
  height: 34px;
  padding: 0 17px 0 9px;
  background: #f5fcfa;
  border: 1px solid #32c3a2;
  color: #111;
  font: 14px/32px "Liberation Sans", sans-serif;
`;
const ToastItem = ({ children }: { children: string }) => (
  <Toast role="status">
    <svg width="19" height="19" viewBox="0 0 19 19" fill="none" stroke="#2aa88b" strokeWidth="1.400">
      <circle cx="9.500" cy="9.500" r="8.700" /><path d="m5 9.500 3.200 3.300L14 6.500" />
    </svg>
    {children}
  </Toast>
);

export default function App() {
  return (
    <Page>
      <GlobalStyle />
      <TopMenu />
      <Toolbar />
      <Body>
        <Rail>
          <PinButton aria-label="固定"><PinIcon /></PinButton>
          <RailTab>所有工程</RailTab><RailTab $on>工程设计</RailTab><RailTab>常用库</RailTab>
        </Rail>
        <ProjectPanel />
        <EditorPane />
        <Layers />
        <Rail $right>
          <PinButton aria-label="固定"><PinIcon /></PinButton>
          <RailTab $right $on>图层</RailTab><RailTab $right>过滤</RailTab><RailTab $right>属性</RailTab>
        </Rail>
      </Body>
      <BottomTabs>
        <BottomPin aria-label="固定"><PinIcon /></BottomPin>
        <BottomTab $w={79} $on>库</BottomTab>
        <BottomTab $w={82}>
          <svg width="14" height="14"><circle cx="7" cy="7" r="7" fill="#a8661c" /><path d="M7 3v5M7 9.500V11" stroke="#2e2e2e" strokeWidth="2" /></svg>
          日志
        </BottomTab>
        <BottomTab $w={97}>器件标准化</BottomTab>
        <BottomTab $w={79}>DRC</BottomTab>
        <BottomTab $w={85}>查找结果</BottomTab>
      </BottomTabs>
      <Taskbar>
        <Apps>
          <AppButton aria-label="开始">
            <svg width="23" height="23">
              <defs><linearGradient id="win" x1="0" y1="0" x2="1" y2="1"><stop stopColor="#8ae0fb" /><stop offset="1" stopColor="#0a94f5" /></linearGradient></defs>
              <path d="M0 0h11v11H0zM12 0h11v11H12zM0 12h11v11H0zM12 12h11v11H12z" fill="url(#win)" />
            </svg>
          </AppButton>
          <AppButton $run aria-label="终端">
            <svg width="24" height="19"><rect width="24" height="19" rx="1" fill="#414141" /><path d="M0 0h8v3.500H0z" fill="#cfcfcf" /><path d="M8 0h8v3.500H8z" fill="#9a9a9a" /><path d="M16 0h8v3.500h-8z" fill="#666" /><path d="m4 6 4.500 4.500L4 15" fill="none" stroke="#e4e4e4" strokeWidth="2.400" /><path d="M11 14.500h7" stroke="#fff" strokeWidth="2" /></svg>
          </AppButton>
          <AppButton $on aria-label="EasyEDA">
            <svg width="24" height="24" fill="none" stroke="#fff">
              <defs><linearGradient id="eda" x1="0" y1="0" x2="1" y2="1"><stop stopColor="#7aa4f8" /><stop offset="1" stopColor="#4378ee" /></linearGradient></defs>
              <rect width="24" height="24" fill="url(#eda)" stroke="none" />
              <g transform="translate(1 2) scale(1.350)" strokeWidth="1.500"><path d={CLOUD} /><circle cx="5.800" cy="11.500" r="1.900" /></g>
              <text x="13" y="20" fill="#fff" stroke="none" fontFamily="Lato, sans-serif" fontSize="5" fontWeight="700">PRO</text>
            </svg>
          </AppButton>
        </Apps>
        <Tray>
          <svg width="12" height="7" fill="none" stroke="currentColor" strokeWidth="1.600"><path d="m1 6 5-5 5 5" /></svg>
          <span>中</span>
          <svg width="17" height="17" fill="none" stroke="currentColor" strokeWidth="1.200"><path d="M10.500 1.500H1v11h12.500V8M4 15.500h7M6 12.500v3M9 12.500v3M12.500.800h3.500v4h-3.500zM14.200 5v10" /></svg>
          <svg width="17" height="14" fill="none" stroke="currentColor" strokeWidth="1.100"><path d="M.8 5v4h2.700l4 3.500v-11L3.500 5zM9.500 4.500q1.500 2.500 0 5" /><path d="M11.500 3q2.500 4 0 8M13.800 1.500q3.500 5.500 0 11" stroke="#777" /></svg>
          <Clock>11:56<br />2026/10/29</Clock>
        </Tray>
      </Taskbar>
      <Toasts><ToastItem>MCP scan started</ToastItem><ToastItem>MCP connected</ToastItem></Toasts>
    </Page>
  );
}
